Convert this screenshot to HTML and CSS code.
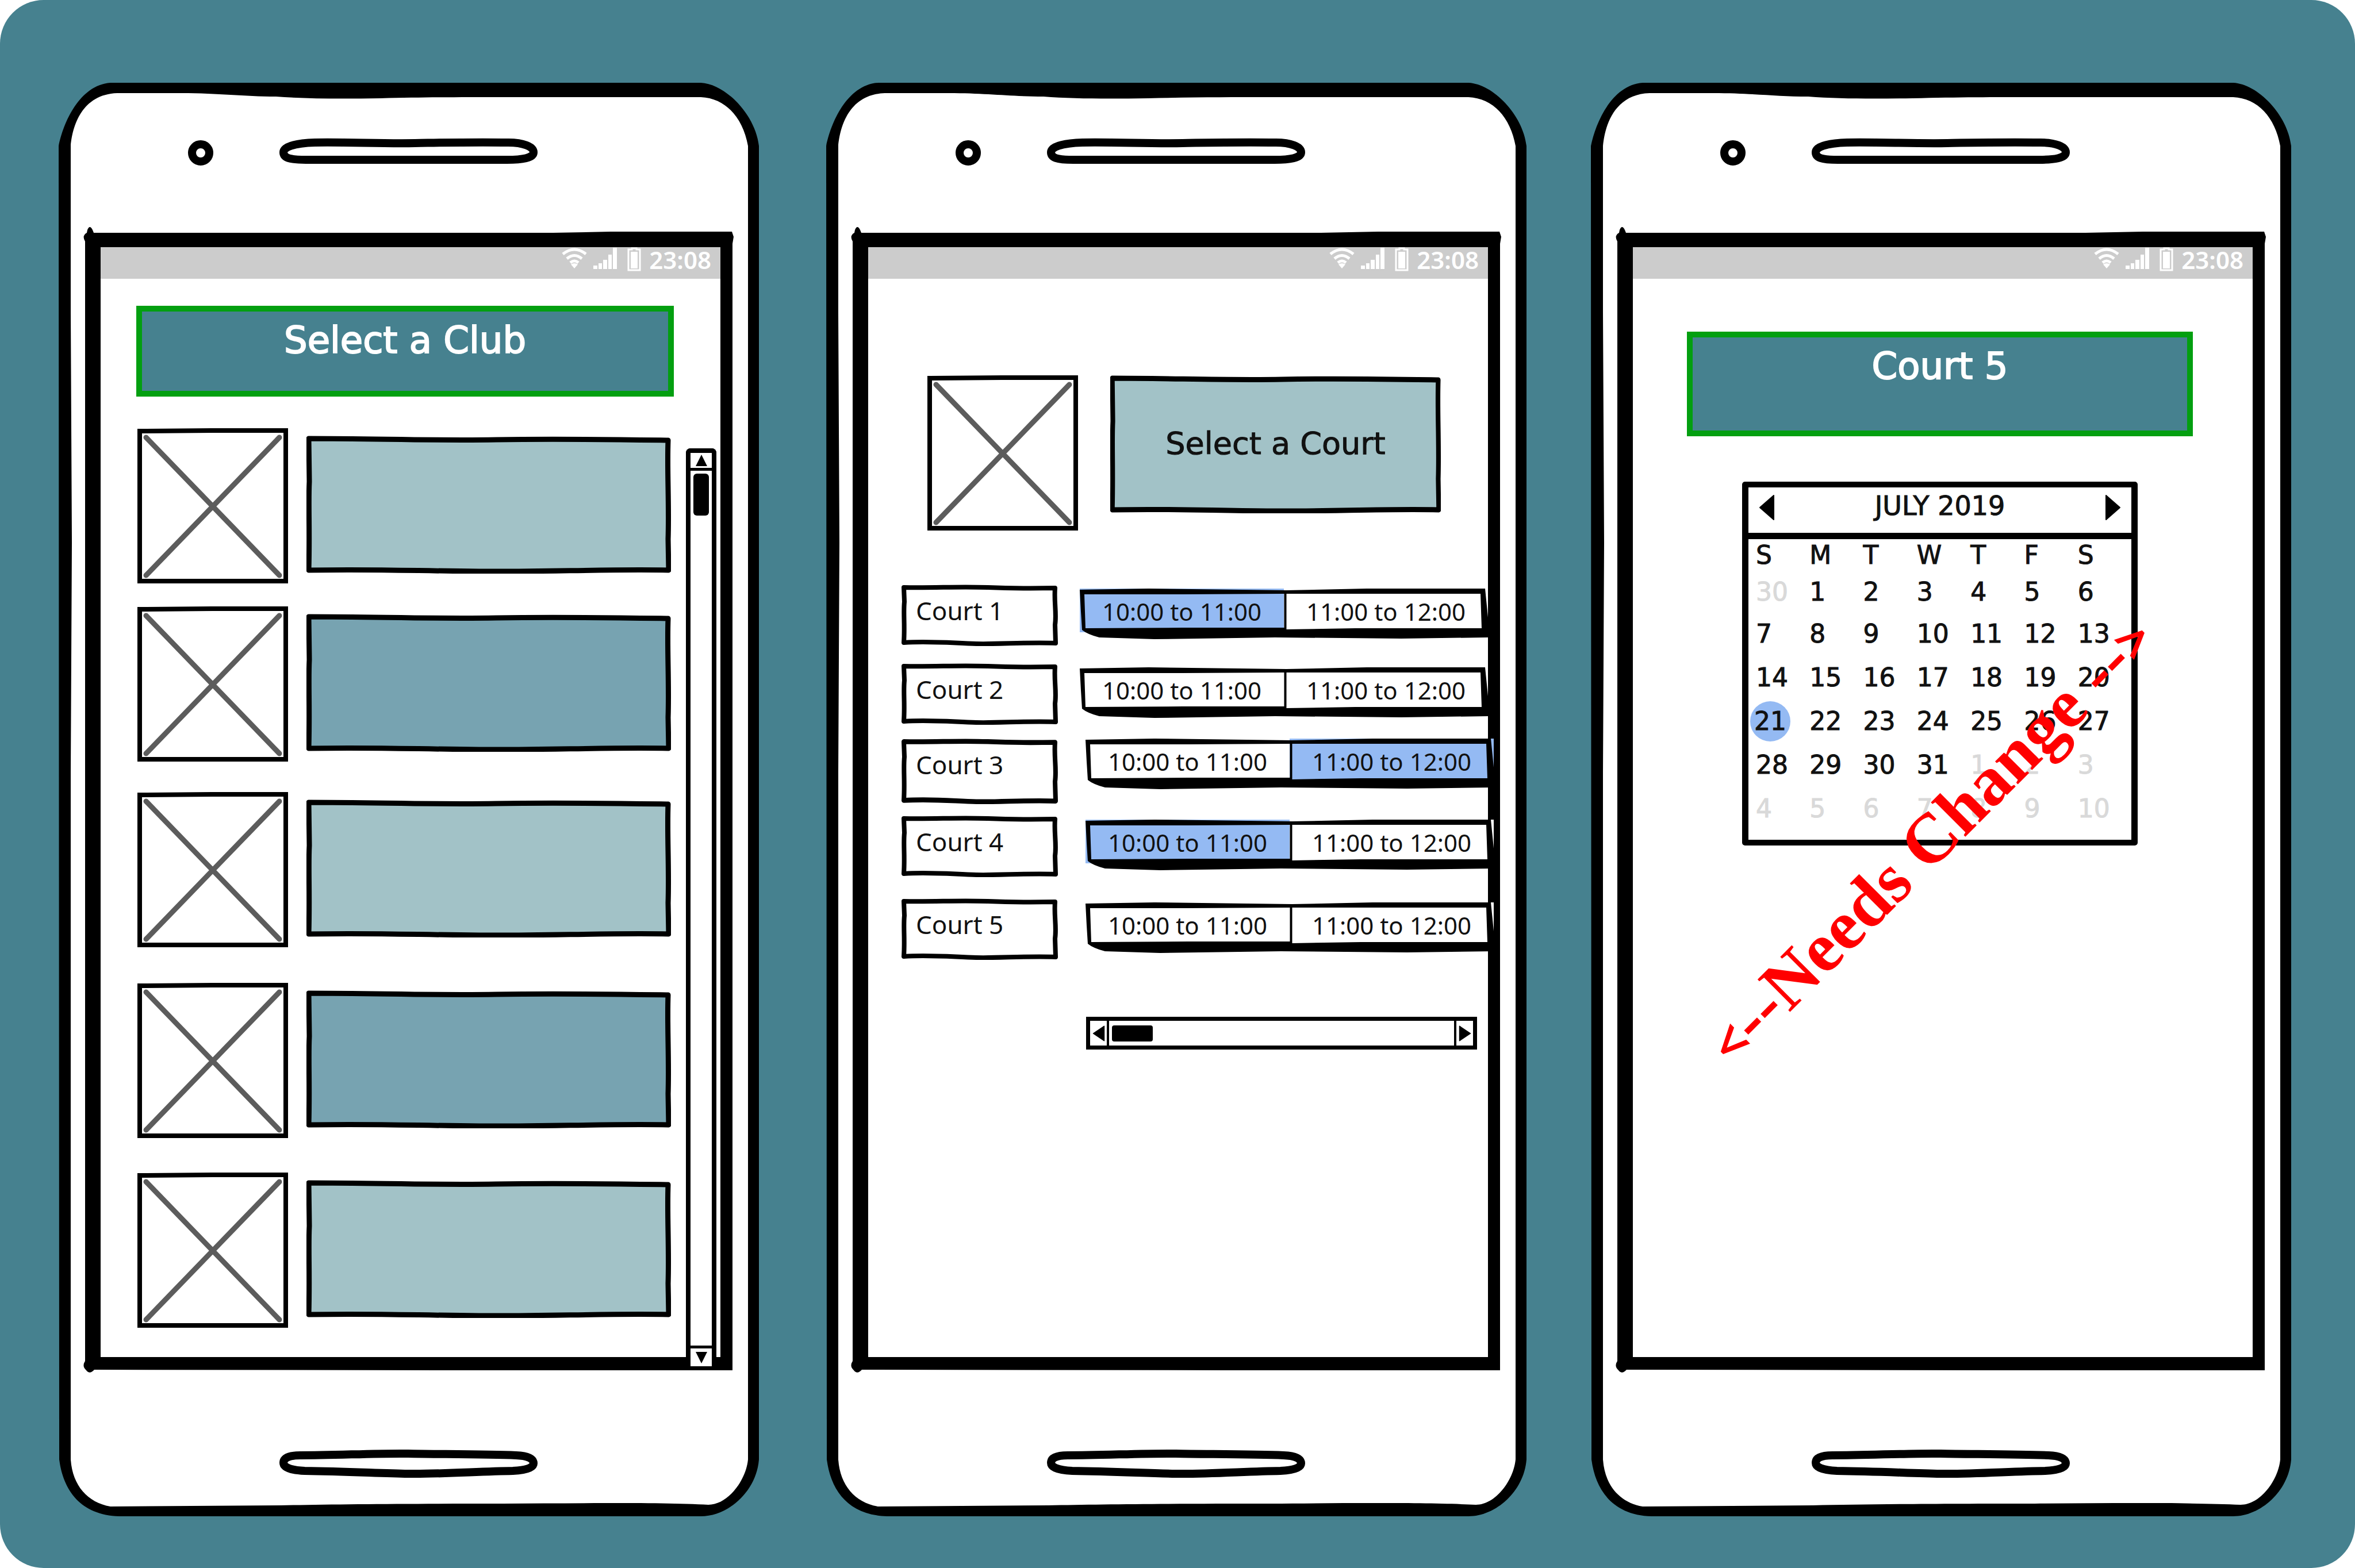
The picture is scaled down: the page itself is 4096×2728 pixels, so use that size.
FILE: index.html
```html
<!DOCTYPE html>
<html lang="en">
<head>
<meta charset="utf-8">
<meta name="viewport" content="width=device-width, initial-scale=1">
<title>Court booking wireframes</title>
<link rel="stylesheet" href="styles.css">
</head>
<body>
<svg class="defs" aria-hidden="true">
  <symbol id="handset" viewBox="0 0 1218 2494" preserveAspectRatio="none">
    <path fill="#000" d="M0 110C8 70 36 4 90 0H1117C1160 2 1212 56 1218 110V2395C1214 2450 1165 2494 1117 2494H115C40 2496 8 2450 1 2395Z"/>
    <path fill="#fff" d="M21 110C24 76 40 20 102 18H213C280 18 320 24 378 24C430 28 490 28 560 27C640 25 700 25 772 25H1117C1160 27 1190 60 1199 110V2395C1196 2430 1165 2474 1130 2474C1050 2470 900 2471 772 2472C600 2472 480 2473 386 2475L90 2477C50 2470 24 2440 21 2395V1200L23 800L21 400Z"/>
    <ellipse cx="247" cy="122" rx="15" ry="15" fill="#fff" stroke="#000" stroke-width="14"/>
    <path fill="#fff" stroke="#000" stroke-width="14" d="M446 104C500 103 560 106 620 105S720 103 782 104C808 104 826 111 826 121S806 134 780 134H430C400 134 391 130 391 121S408 105 446 104Z"/>
    <path fill="#fff" stroke="#000" stroke-width="14" d="M420 2388C480 2388 560 2384 608 2385S740 2386 796 2388C818 2389 826 2394 826 2402S812 2414 790 2415C730 2416 660 2421 608 2420S500 2416 428 2415C402 2414 391 2408 391 2401S398 2388 420 2388Z"/>
    <path fill="#000" fill-rule="evenodd" d="M50 256Q54 246 59 256L61 261H860L960 259H1171L1174 268L1172 280V2240H700L62 2239Q54 2248 48 2240Q40 2233 46 2224V276Q40 266 49 261ZM73 286V2217H1151V286Z"/>
  </symbol>
  <symbol id="picture" viewBox="0 0 262 270" preserveAspectRatio="none">
    <path fill="#fff" stroke="#000" stroke-width="8" d="M4 5L130 4L258 4V266H4Z"/>
    <path fill="none" stroke="#5c5c5c" stroke-width="9" stroke-linecap="round" d="M15 16L247 256M247 16L15 256"/>
  </symbol>
  <symbol id="panel" viewBox="0 0 634 240" preserveAspectRatio="none">
    <path fill="currentColor" stroke="#000" stroke-width="9" stroke-linejoin="round" d="M4 5C120 5 220 9 330 7S560 7 629 8C627 60 631 120 629 180L630 234C520 232 420 237 300 236S120 232 4 234C6 160 3 120 5 80Z"/>
  </symbol>
  <symbol id="label-box" viewBox="0 0 272 107" preserveAspectRatio="none">
    <path fill="#fff" stroke="#000" stroke-width="8" stroke-linejoin="round" d="M4 5C60 6 100 3 150 5S220 7 267 6C265 30 270 50 267 70L268 102C220 100 170 104 130 103S50 98 4 101C6 70 3 50 5 30Z"/>
  </symbol>
  <symbol id="bevel" viewBox="0 0 711 88" preserveAspectRatio="none">
    <path fill="#000" fill-rule="evenodd" d="M0 2L120 0L360 3L500 0H706L711 50V85L560 87L340 85L130 88L34 85Q14 80 4 72L2 40ZM8 10L10 69L180 68L356 68V9L180 10ZM360 9V71L480 69H700L698 9L520 9Z"/>
  </symbol>
  <symbol id="wifi" viewBox="0 0 46 38">
    <path fill="none" stroke="#fff" stroke-width="5" d="M3 12Q23 -4 43 12M10 20Q23 9 36 20M16 27Q23 21 30 27"/>
    <path fill="#fff" d="M17 30Q23 26 29 30L23 37Z"/>
  </symbol>
  <symbol id="signal" viewBox="0 0 42 38">
    <path fill="#fff" d="M0 32H7V38H0ZM9 28H15V38H9ZM17 22H24V38H17ZM26 13H32V38H26ZM34 1H41V38H34Z"/>
  </symbol>
  <symbol id="battery" viewBox="0 0 24 42">
    <path fill="none" stroke="#fff" stroke-width="3" d="M2 4H8V2H16V4H22V40H2Z"/>
    <path fill="#fff" d="M6 8H18V37H6Z"/>
  </symbol>
  <symbol id="triangle" viewBox="0 0 28 46" preserveAspectRatio="none">
    <path fill="#000" stroke="#000" stroke-width="2" stroke-linejoin="round" d="M2 23L26 2V44Z"/>
  </symbol>
</svg>

<main class="board">
  <section class="phone" aria-label="Select a club">
    <svg class="backdrop" aria-hidden="true"><use href="#handset"/></svg>
    <div class="screen">
      <header class="status">
        <svg class="wifi" aria-hidden="true"><use href="#wifi"/></svg>
        <svg class="signal" aria-hidden="true"><use href="#signal"/></svg>
        <svg class="battery" aria-hidden="true"><use href="#battery"/></svg>
        <time>23:08</time>
      </header>
      <h1 class="title">Select a Club</h1>
      <div class="clubs">
        <div class="club-list">
          <svg class="picture"><use href="#picture"/></svg>
          <button class="panel light" aria-label="Club 1"><svg class="backdrop"><use href="#panel"/></svg></button>
          <svg class="picture"><use href="#picture"/></svg>
          <button class="panel mid" aria-label="Club 2"><svg class="backdrop"><use href="#panel"/></svg></button>
          <svg class="picture"><use href="#picture"/></svg>
          <button class="panel light" aria-label="Club 3"><svg class="backdrop"><use href="#panel"/></svg></button>
          <svg class="picture"><use href="#picture"/></svg>
          <button class="panel mid" aria-label="Club 4"><svg class="backdrop"><use href="#panel"/></svg></button>
          <svg class="picture"><use href="#picture"/></svg>
          <button class="panel light" aria-label="Club 5"><svg class="backdrop"><use href="#panel"/></svg></button>
        </div>
        <div class="vbar">
          <button class="vbar-up" aria-label="Scroll up"><svg viewBox="0 0 24 24"><path d="M12 2L22 22H2Z"/></svg></button>
          <div class="vbar-track"><div class="vbar-thumb"></div></div>
          <button class="vbar-down" aria-label="Scroll down"><svg viewBox="0 0 24 24"><path d="M2 2H22L12 22Z"/></svg></button>
        </div>
      </div>
    </div>
  </section>

  <section class="phone" aria-label="Select a court">
    <svg class="backdrop" aria-hidden="true"><use href="#handset"/></svg>
    <div class="screen">
      <header class="status">
        <svg class="wifi" aria-hidden="true"><use href="#wifi"/></svg>
        <svg class="signal" aria-hidden="true"><use href="#signal"/></svg>
        <svg class="battery" aria-hidden="true"><use href="#battery"/></svg>
        <time>23:08</time>
      </header>
      <div class="chosen">
        <svg class="picture"><use href="#picture"/></svg>
        <button class="panel light"><svg class="backdrop"><use href="#panel"/></svg><span>Select a Court</span></button>
      </div>
      <div class="courts">
        <div class="court">
          <div class="court-name"><svg class="backdrop"><use href="#label-box"/></svg><span>Court 1</span></div>
          <div class="slots"><button class="on">10:00 to 11:00</button><button>11:00 to 12:00</button><svg class="backdrop"><use href="#bevel"/></svg></div>
        </div>
        <div class="court">
          <div class="court-name"><svg class="backdrop"><use href="#label-box"/></svg><span>Court 2</span></div>
          <div class="slots"><button>10:00 to 11:00</button><button>11:00 to 12:00</button><svg class="backdrop"><use href="#bevel"/></svg></div>
        </div>
        <div class="court shifted raised">
          <div class="court-name"><svg class="backdrop"><use href="#label-box"/></svg><span>Court 3</span></div>
          <div class="slots"><button>10:00 to 11:00</button><button class="on">11:00 to 12:00</button><svg class="backdrop"><use href="#bevel"/></svg></div>
        </div>
        <div class="court shifted">
          <div class="court-name"><svg class="backdrop"><use href="#label-box"/></svg><span>Court 4</span></div>
          <div class="slots"><button class="on">10:00 to 11:00</button><button>11:00 to 12:00</button><svg class="backdrop"><use href="#bevel"/></svg></div>
        </div>
        <div class="court shifted">
          <div class="court-name"><svg class="backdrop"><use href="#label-box"/></svg><span>Court 5</span></div>
          <div class="slots"><button>10:00 to 11:00</button><button>11:00 to 12:00</button><svg class="backdrop"><use href="#bevel"/></svg></div>
        </div>
      </div>
      <div class="hbar">
        <button class="hbar-left" aria-label="Scroll left"><svg><use href="#triangle"/></svg></button>
        <div class="hbar-track"><div class="hbar-thumb"></div></div>
        <button class="hbar-right" aria-label="Scroll right"><svg class="flip"><use href="#triangle"/></svg></button>
      </div>
    </div>
  </section>

  <section class="phone" aria-label="Court 5 calendar">
    <svg class="backdrop" aria-hidden="true"><use href="#handset"/></svg>
    <div class="screen">
      <header class="status">
        <svg class="wifi" aria-hidden="true"><use href="#wifi"/></svg>
        <svg class="signal" aria-hidden="true"><use href="#signal"/></svg>
        <svg class="battery" aria-hidden="true"><use href="#battery"/></svg>
        <time>23:08</time>
      </header>
      <h1 class="title tall">Court 5</h1>
      <div class="calendar">
        <div class="month">
          <button aria-label="Previous month"><svg><use href="#triangle"/></svg></button>
          <h2>JULY 2019</h2>
          <button aria-label="Next month"><svg class="flip"><use href="#triangle"/></svg></button>
        </div>
        <table>
          <thead><tr><th>S</th><th>M</th><th>T</th><th>W</th><th>T</th><th>F</th><th>S</th></tr></thead>
          <tbody>
            <tr class="first"><td class="out">30</td><td>1</td><td>2</td><td>3</td><td>4</td><td>5</td><td>6</td></tr>
            <tr><td>7</td><td>8</td><td>9</td><td>10</td><td>11</td><td>12</td><td>13</td></tr>
            <tr><td>14</td><td>15</td><td>16</td><td>17</td><td>18</td><td>19</td><td>20</td></tr>
            <tr><td><span class="today">21</span></td><td>22</td><td>23</td><td>24</td><td>25</td><td>26</td><td>27</td></tr>
            <tr><td>28</td><td>29</td><td>30</td><td>31</td><td class="out">1</td><td class="out">2</td><td class="out">3</td></tr>
            <tr><td class="out">4</td><td class="out">5</td><td class="out">6</td><td class="out">7</td><td class="out">8</td><td class="out">9</td><td class="out">10</td></tr>
          </tbody>
        </table>
      </div>
      <p class="note"><span class="tip">&lt;</span>--Needs Change --<span class="tip">&gt;</span></p>
    </div>
  </section>
</main>
</body>
</html>
```
FILE: styles.css
```css
* {
  box-sizing: border-box;
}

body {
  margin: 0;
  background: #fff;
  color: #111;
  font-family: "Noto Sans", sans-serif;
  font-size: 42px;
  line-height: 48px;
}

button {
  margin: 0;
  padding: 0;
  border: 0;
  background: none;
  color: inherit;
  font: inherit;
}

.defs {
  position: absolute;
  width: 0;
  height: 0;
}

.backdrop {
  position: absolute;
  inset: 0;
  width: 100%;
  height: 100%;
  pointer-events: none;
}

.flip {
  transform: scaleX(-1);
}

/* Board and phones */

.board {
  display: grid;
  grid-template-columns: 1fr 117px 1fr 112px 1fr;
  min-height: 100vh;
  padding: 144px 111px 90px 102px;
  border-radius: 76px;
  background: #46818f;
}

.phone {
  position: relative;
  padding: 286px 67px 277px 73px;
}

.phone:nth-child(2) {
  grid-column: 3;
}

.phone:nth-child(3) {
  grid-column: 5;
}

.screen {
  position: relative;
  height: 100%;
}

.status {
  display: flex;
  align-items: flex-start;
  justify-content: flex-end;
  height: 55px;
  padding-right: 16px;
  background: #ccc;
  color: #fff;
  font-weight: 600;
}

.status time {
  line-height: 44px;
}

.wifi {
  width: 46px;
  height: 38px;
  margin-right: 10px;
}

.signal {
  width: 42px;
  height: 38px;
  margin-right: 17px;
}

.battery {
  width: 24px;
  height: 42px;
  margin-right: 14px;
}

.title {
  min-height: 158px;
  margin: 47px 81px 0 62px;
  padding: 14px 0 0;
  border: 10px solid #039f10;
  background: #46818f;
  color: #fff;
  font: 400 64px/72px "DejaVu Sans", sans-serif;
  text-align: center;
  -webkit-text-stroke: 2px currentColor;
}

.title.tall {
  min-height: 182px;
  margin: 92px 104px 0 94px;
}

/* Club list */

.clubs {
  display: flex;
  gap: 26px;
  margin: 55px 7px -16px 64px;
}

.club-list {
  flex: 1;
  display: grid;
  grid-template-columns: 262px 1fr;
  grid-template-rows: 310px 323px 332px 330px 270px;
  column-gap: 32px;
  padding-bottom: 67px;
}

.picture {
  width: 262px;
  height: 270px;
}

.panel {
  position: relative;
  height: 240px;
}

.club-list .panel {
  margin-top: 13px;
}

.panel.light {
  color: #a2c2c7;
}

.panel.mid {
  color: #77a3b1;
}

.panel span {
  position: relative;
  color: #111;
  font-family: "DejaVu Sans", sans-serif;
  font-size: 54px;
  -webkit-text-stroke: 1px currentColor;
}

.vbar {
  display: flex;
  flex-direction: column;
  width: 53px;
  margin-top: 35px;
  border: solid #000;
  border-width: 8px 8px 0;
  border-radius: 8px 8px 0 0;
  background: #fff;
}

.vbar button {
  display: grid;
  place-items: center;
}

.vbar svg {
  width: 26px;
  height: 24px;
}

.vbar-up {
  height: 31px;
  border-bottom: 5px solid #000;
}

.vbar-down {
  height: 36px;
  border-top: 5px solid #000;
}

.vbar-track {
  flex: 1;
  padding: 5px;
}

.vbar-thumb {
  height: 73px;
  border-radius: 6px;
  background: #000;
}

/* Court times */

.chosen {
  display: flex;
  gap: 56px;
  margin: 168px 82px 0 103px;
}

.chosen .panel {
  flex: 1;
}

.courts {
  display: grid;
  grid-template-rows: 137px 131px 134px 144px 108px;
  margin: 94px -12px 0 58px;
}

.court {
  display: flex;
  align-items: flex-start;
  gap: 38px;
}

.court-name {
  position: relative;
  width: 272px;
  height: 107px;
  padding: 21px 25px;
  font-size: 44px;
}

.court-name span {
  position: relative;
}

.slots {
  position: relative;
  flex: 1;
  display: flex;
  height: 88px;
  margin: 7px 12px 0 0;
  overflow: hidden;
}

.slots button {
  flex: 1;
  height: 76px;
  padding-top: 4px;
  background: #fff;
}

.slots .on {
  background: #94baf3;
}

.shifted {
  gap: 48px;
}

.shifted .slots {
  margin-right: 2px;
}

.raised .court-name {
  height: 114px;
}

.raised .slots {
  margin-top: 0;
}

.hbar {
  display: flex;
  height: 57px;
  margin: 98px 19px 0 379px;
  border: 7px solid #000;
  background: #fff;
}

.hbar button {
  display: grid;
  place-items: center;
  width: 33px;
}

.hbar svg {
  width: 22px;
  height: 28px;
}

.hbar-left {
  border-right: 4px solid #000;
}

.hbar-right {
  border-left: 4px solid #000;
}

.hbar-track {
  flex: 1;
  padding: 8px 5px;
}

.hbar-thumb {
  width: 71px;
  height: 28px;
  border-radius: 4px;
  background: #000;
}

/* Calendar */

.calendar {
  margin: 79px 200px 0 190px;
  padding-bottom: 16px;
  border: solid #000;
  border-width: 10px 11px;
  border-radius: 5px;
  background: #fff;
  font: 400 44px/76px "DejaVu Sans", sans-serif;
  -webkit-text-stroke: 1px currentColor;
}

.month {
  display: flex;
  align-items: flex-start;
  justify-content: space-between;
  height: 90px;
  padding: 0 18px;
  border-bottom: 11px solid #000;
}

.month h2 {
  margin: 0;
  font: inherit;
  font-size: 46px;
  line-height: 64px;
}

.month button {
  display: grid;
  place-items: center;
  width: 28px;
  height: 70px;
}

.month svg {
  width: 28px;
  height: 46px;
}

.calendar table {
  width: 100%;
  padding-left: 13px;
  border-spacing: 0;
  table-layout: fixed;
}

.calendar th,
.calendar td {
  height: 76px;
  padding: 0;
  font-weight: 400;
  text-align: left;
}

.calendar th {
  height: 56px;
  line-height: 56px;
}

.calendar .first td {
  height: 71px;
  line-height: 71px;
}

.calendar .out {
  color: #d9d9d9;
}

.today {
  display: block;
  width: 70px;
  height: 70px;
  margin-left: -10px;
  border-radius: 50%;
  background: #94baf3;
  line-height: 70px;
  text-align: center;
}

.note {
  position: absolute;
  top: 1030px;
  left: 516px;
  margin: 0;
  color: #f00;
  font: 700 122px/120px "Liberation Serif", serif;
  white-space: nowrap;
  transform: translate(-50%, -50%) rotate(-45deg);
}

.note .tip {
  font: 600 96px/84px "Noto Sans", sans-serif;
}
```
